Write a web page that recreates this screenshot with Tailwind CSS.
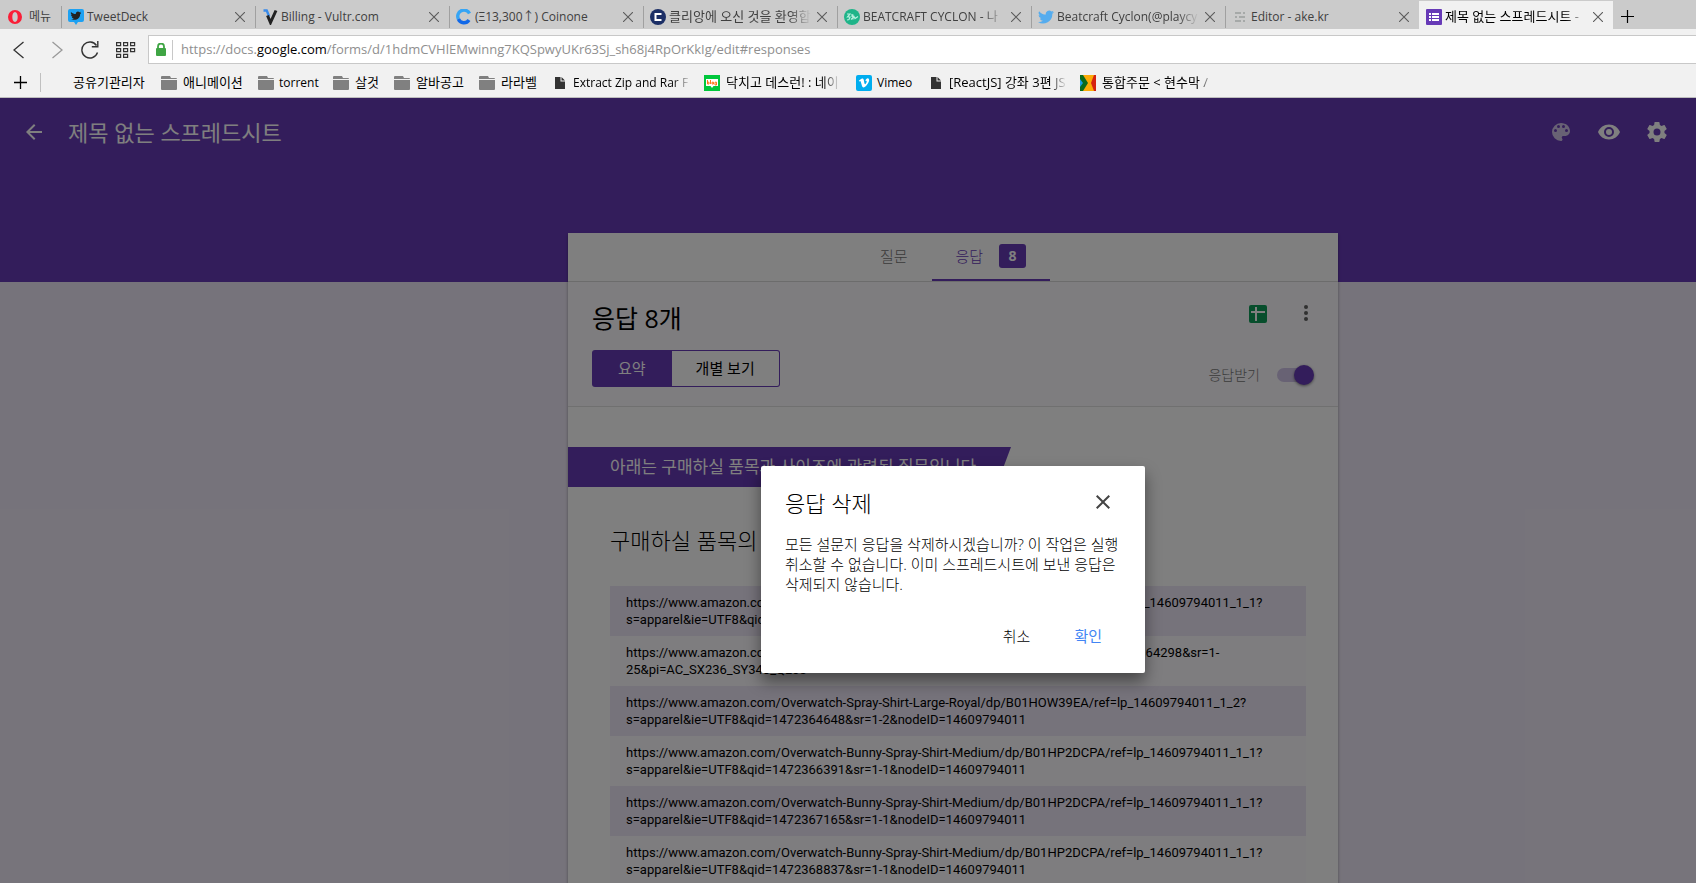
<!DOCTYPE html>
<html lang="ko">
<head>
<meta charset="utf-8">
<meta name="viewport" content="width=device-width, initial-scale=1">
<title>제목 없는 스프레드시트</title>
<script src="https://cdn.jsdelivr.net/npm/@tailwindcss/browser@4"></script>
</head>
<body class="flex h-screen flex-col overflow-hidden bg-[#f1f1f1] font-['Open_Sans','Noto_Sans_CJK_KR',sans-serif] text-[13px] text-black">

<svg class="hidden" aria-hidden="true">
  <symbol id="x" viewBox="0 0 10 10"><path d="M0 0l10 10M10 0L0 10" fill="none" stroke="#5c5c5c" stroke-width="1.1"/></symbol>
  <symbol id="folder" viewBox="0 0 16 14"><path d="M0 1q0-1 1-1h8l1 2h5q1 0 1 1H0z M0 4h16v9q0 1-1 1H1q-1 0-1-1z" fill="#808080"/></symbol>
  <symbol id="doc" viewBox="0 0 10 12"><path d="M0 0h5.500v4.500H10V12H0z M6.500 0L10 3.500H6.500z" fill="#333"/></symbol>
</svg>

<!-- Browser tabs -->
<nav aria-label="탭" class="flex h-[29px] shrink-0 overflow-hidden bg-[#cbcbcb] text-[#404040]">
  <button class="flex w-[61px] shrink-0 items-center gap-[7px] pt-1 pl-2 text-xs">
    <svg class="size-[14px]" viewBox="0 0 14 14"><path fill-rule="evenodd" fill="#fa1e37" d="M7 0a7 7 0 100 14A7 7 0 007 0zm0 2c1.700 0 2.700 2.200 2.700 5S8.700 12 7 12 4.300 9.800 4.300 7 5.300 2 7 2z"/></svg>
    메뉴
  </button>
  <div class="flex w-[194px] shrink-0 items-center pt-1">
    <span class="h-[22px] w-px bg-[#a0a0a0]"></span>
    <svg class="ml-[6px] size-4 shrink-0" viewBox="0 0 16 16"><path fill="#1da1f2" d="M2 0h12q2 0 2 2v9q0 2-2 2h-4l-2 3-2-3H2q-2 0-2-2V2q0-2 2-2z"/><path fill="#222" d="M3 3c1.500 1.500 3 2 4.800 2C7.600 3 10 1.800 11.500 3.200L13 2.800l-.8 1.300.9-.1-1 1.200C12.200 9.500 8 12.200 3 10.200c1.300 0 2-.2 2.700-.8-1.200-.2-1.600-.7-1.900-1.500h.9C3.500 7.300 3.100 6.600 3.100 5.700l.8.200C2.900 5 2.600 4 3 3z"/></svg>
    <span class="ml-[3px] w-[142px] overflow-hidden text-xs whitespace-nowrap">TweetDeck</span>
    <button aria-label="탭 닫기" class="ml-[6px]"><svg class="size-[10px]"><use href="#x"/></svg></button>
  </div>
  <div class="flex w-[194px] shrink-0 items-center pt-1">
    <span class="h-[22px] w-px bg-[#a0a0a0]"></span>
    <svg class="ml-[6px] size-4 shrink-0" viewBox="0 0 16 16"><path d="M1.500 1.500h3.200l2.500 6" fill="none" stroke="#3a8bea" stroke-width="2.400"/><path d="M5.500 6.500l3 7L14 1.500" fill="none" stroke="#222" stroke-width="3"/></svg>
    <span class="ml-[3px] w-[142px] overflow-hidden text-xs whitespace-nowrap">Billing - Vultr.com</span>
    <button aria-label="탭 닫기" class="ml-[6px]"><svg class="size-[10px]"><use href="#x"/></svg></button>
  </div>
  <div class="flex w-[194px] shrink-0 items-center pt-1">
    <span class="h-[22px] w-px bg-[#a0a0a0]"></span>
    <svg class="ml-[6px] size-4 shrink-0" viewBox="0 0 16 16"><path d="M13.500 4.500A6 6 0 102.400 10" fill="none" stroke="#36a5f5" stroke-width="3.400"/><path d="M2.400 10A6 6 0 0013 11" fill="none" stroke="#1269e8" stroke-width="3.400"/></svg>
    <span class="ml-[3px] w-[142px] overflow-hidden text-xs whitespace-nowrap">(Ξ13,300↑) Coinone</span>
    <button aria-label="탭 닫기" class="ml-[6px]"><svg class="size-[10px]"><use href="#x"/></svg></button>
  </div>
  <div class="flex w-[194px] shrink-0 items-center pt-1">
    <span class="h-[22px] w-px bg-[#a0a0a0]"></span>
    <svg class="ml-[6px] size-4 shrink-0" viewBox="0 0 16 16"><circle cx="8" cy="8" r="8" fill="#1c2f66"/><path d="M11.500 5h-6v6h6" fill="none" stroke="#fff" stroke-width="2"/></svg>
    <span class="ml-[3px] w-[142px] whitespace-nowrap mask-r-from-85%">클리앙에 오신 것을 환영합</span>
    <button aria-label="탭 닫기" class="ml-[6px]"><svg class="size-[10px]"><use href="#x"/></svg></button>
  </div>
  <div class="flex w-[194px] shrink-0 items-center pt-1">
    <span class="h-[22px] w-px bg-[#a0a0a0]"></span>
    <svg class="ml-[6px] size-4 shrink-0" viewBox="0 0 16 16"><circle cx="8" cy="8" r="8" fill="#1fb489"/><path d="M3 5h3L3.500 8H6l-1 2.500L3 11M8 5v3m-1 2.500l3-3 1 2 3-2M9 10.500v-5" fill="none" stroke="#b4eedd" stroke-width="1.200"/></svg>
    <span class="ml-[3px] w-[142px] text-xs whitespace-nowrap mask-r-from-85%">BEATCRAFT CYCLON - 나</span>
    <button aria-label="탭 닫기" class="ml-[6px]"><svg class="size-[10px]"><use href="#x"/></svg></button>
  </div>
  <div class="flex w-[194px] shrink-0 items-center pt-1">
    <span class="h-[22px] w-px bg-[#a0a0a0]"></span>
    <svg class="ml-[6px] size-4 shrink-0" viewBox="0 0 24 24"><path fill="#55acee" d="M24 4.600a10 10 0 01-2.800.8 5 5 0 002.100-2.700 10 10 0 01-3.100 1.200 4.900 4.900 0 00-8.400 4.500A14 14 0 011.700 3.200a4.900 4.900 0 001.500 6.500 4.900 4.900 0 01-2.200-.6 4.900 4.900 0 003.900 4.900 5 5 0 01-2.200.1 4.900 4.900 0 004.600 3.400A10 10 0 010 19.500a14 14 0 0021.500-12.400A10 10 0 0024 4.600z"/></svg>
    <span class="ml-[3px] w-[142px] text-xs whitespace-nowrap mask-r-from-85%">Beatcraft Cyclon(@playcy</span>
    <button aria-label="탭 닫기" class="ml-[6px]"><svg class="size-[10px]"><use href="#x"/></svg></button>
  </div>
  <div class="flex w-[194px] shrink-0 items-center pt-1">
    <span class="h-[22px] w-px bg-[#a0a0a0]"></span>
    <svg class="ml-[6px] size-4 shrink-0" viewBox="0 0 16 16"><path d="M3 4h6m2 0h2M3 8h2m2 0h6M3 12h6m2 0h2" stroke="#9a9f9d" stroke-width="1.600"/></svg>
    <span class="ml-[3px] w-[142px] overflow-hidden text-xs whitespace-nowrap">Editor - ake.kr</span>
    <button aria-label="탭 닫기" class="ml-[6px]"><svg class="size-[10px]"><use href="#x"/></svg></button>
  </div>
  <div class="mt-px flex w-[194px] shrink-0 items-center bg-[#f1f1f1] pt-[3px] text-black">
    <svg class="ml-[7px] size-4 shrink-0" viewBox="0 0 16 16"><rect width="16" height="16" rx="1" fill="#673ab7"/><path d="M3 5h2m1 0h7M3 8h2m1 0h7M3 11h2m1 0h7" stroke="#fff" stroke-width="2"/></svg>
    <span class="ml-[3px] w-[142px] whitespace-nowrap mask-r-from-85%">제목 없는 스프레드시트 -</span>
    <button aria-label="탭 닫기" class="ml-[6px]"><svg class="size-[10px]"><use href="#x"/></svg></button>
  </div>
  <button aria-label="새 탭" class="ml-2 pt-1"><svg class="size-[13px]" viewBox="0 0 13 13"><path d="M6.500 0v13M0 6.500h13" stroke="#000" stroke-width="1.200"/></svg></button>
</nav>

<!-- Address bar -->
<div class="mt-[6px] flex h-[29px] shrink-0 items-center">
  <div class="flex w-[148px] shrink-0 items-center pl-[13px]">
    <button aria-label="뒤로"><svg class="h-[18px] w-[11px]" viewBox="0 0 11 18"><path d="M10.500 1L1 9l9.500 8" fill="none" stroke="#333" stroke-width="1.300"/></svg></button>
    <button aria-label="앞으로" class="ml-7"><svg class="h-[18px] w-[11px]" viewBox="0 0 11 18"><path d="M.5 1L10 9 .5 17" fill="none" stroke="#9a9a9a" stroke-width="1.300"/></svg></button>
    <button aria-label="새로고침" class="ml-[18px]"><svg class="size-[18px]" viewBox="0 0 18 18"><path d="M16.500 11.500A8 8 0 1115.500 4.500M16.800 0v5.700h-6" fill="none" stroke="#333" stroke-width="1.400"/></svg></button>
    <button aria-label="스피드 다이얼" class="ml-[17px]"><svg class="h-4 w-[20px]" viewBox="0 0 20 16"><path d="M.6.6h4v3h-4zM7.600.6h4v3h-4zM14.600.6h4v3h-4zM.6 6.600h4v3h-4zM7.600 6.600h4v3h-4zM14.600 6.600h4v3h-4zM.6 12.400h4v3h-4zM7.600 12.400h4v3h-4z" fill="none" stroke="#333" stroke-width="1.200"/></svg></button>
  </div>
  <div class="flex h-full flex-1 items-center border border-r-0 border-[#c8c8c8] bg-white">
    <svg class="ml-[7px] h-[13px] w-[10px]" viewBox="0 0 10 13"><path d="M2 6V3.500a3 3 0 016 0V6" fill="none" stroke="#3fa544" stroke-width="1.800"/><rect y="5" width="10" height="8" rx="1" fill="#3fa544"/></svg>
    <span class="ml-[6px] h-5 w-px bg-[#c8c8c8]"></span>
    <a href="#responses" class="ml-2 whitespace-nowrap text-[#8f8f8f]">https://docs.<span class="text-black">google.com</span>/forms/d/1hdmCVHlEMwinng7KQSpwyUKr63Sj_sh68j4RpOrKkIg/edit#responses</a>
  </div>
</div>

<!-- Bookmarks bar -->
<div class="flex h-[34px] shrink-0 items-center overflow-hidden border-b border-[#bdbdbd] pt-1 whitespace-nowrap">
  <button aria-label="북마크 추가" class="ml-[14px]"><svg class="size-[13px]" viewBox="0 0 13 13"><path d="M6.500 0v13M0 6.500h13" stroke="#000" stroke-width="1.300"/></svg></button>
  <span class="ml-[13px] h-[19px] w-px bg-[#c0c0c0]"></span>
  <a href="#" class="ml-8 w-[88px]">공유기관리자</a>
  <a href="#" class="flex w-[97px] items-center gap-[6px]"><svg class="h-[14px] w-4 shrink-0"><use href="#folder"/></svg>애니메이션</a>
  <a href="#" class="flex w-[75px] items-center gap-[5px] text-xs"><svg class="h-[14px] w-4 shrink-0"><use href="#folder"/></svg>torrent</a>
  <a href="#" class="flex w-[61px] items-center gap-[6px]"><svg class="h-[14px] w-4 shrink-0"><use href="#folder"/></svg>살것</a>
  <a href="#" class="flex w-[85px] items-center gap-[6px]"><svg class="h-[14px] w-4 shrink-0"><use href="#folder"/></svg>알바공고</a>
  <a href="#" class="flex w-[76px] items-center gap-[6px]"><svg class="h-[14px] w-4 shrink-0"><use href="#folder"/></svg>라라벨</a>
  <a href="#" class="flex w-[149px] items-center gap-2 text-xs"><svg class="h-3 w-[10px] shrink-0"><use href="#doc"/></svg><span class="w-[118px] mask-r-from-85%">Extract Zip and Rar F</span></a>
  <a href="#" class="flex w-[152px] items-center gap-[6px]">
    <svg class="size-4 shrink-0" viewBox="0 0 16 16"><path fill="#00c73c" d="M0 0h16v16H0z"/><path fill="#fff" d="M2 4h12v7H9.500L8 13l-1.500-2H2z"/><path d="M3.500 5v4H5V7.200H3.500M6.500 5v4M8 7.200h1.500V9H8zM11 7.200h1.500V10H11z" stroke="#f60" stroke-width=".9" fill="none"/></svg>
    <span class="w-[114px] mask-r-from-85%">닥치고 데스런! : 네이</span></a>
  <a href="#" class="flex w-[75px] items-center gap-[5px] text-xs">
    <svg class="size-4 shrink-0" viewBox="0 0 24 24"><rect width="24" height="24" rx="3" fill="#00adef"/><path fill="#fff" d="M19.700 8.200c-.1 1.500-1.200 3.700-3.200 6.300-2.100 2.700-3.900 4.100-5.300 4.100-.9 0-1.700-.8-2.300-2.500L7.600 11.500c-.5-1.700-1-2.500-1.500-2.500-.1 0-.5.3-1.200.7L4.200 8.800c2-1.700 3.900-3.500 5.100-3.600 1.300-.1 2.200.8 2.500 2.800.7 4.500 1.200 6 1.900 6 .6 0 2.300-2.800 2.400-3.900.1-1.500-1.100-1.500-2.200-1C15.500 3.200 20 3.800 19.700 8.200z"/></svg>Vimeo</a>
  <a href="#" class="flex w-[149px] items-center gap-2"><svg class="h-3 w-[10px] shrink-0"><use href="#doc"/></svg><span class="w-[118px] mask-r-from-85%">[ReactJS] 강좌 3편 JS</span></a>
  <a href="#" class="flex items-center gap-[6px]">
    <svg class="size-4 shrink-0" viewBox="0 0 16 16"><path fill="#fbab08" d="M0 0h16v16H0z"/><path fill="#1a9fe8" d="M0 3l4 5-4 5z"/><path fill="#0a6b1c" d="M0 0h3l5 8-5 8H0v-4l3-4-3-4z"/><path fill="#d52211" d="M16 0v16h-2l-3-8 3-8z"/></svg>
    <span class="w-[112px] mask-r-from-85%">통합주문 &lt; 현수막 /</span></a>
</div>

<!-- Forms application -->
<div class="relative min-h-0 flex-1 overflow-hidden bg-[#ede7f6]">
  <header class="h-[184px] bg-[#673ab7] text-white">
    <div class="flex h-[68px] items-center px-[22px]">
      <button aria-label="뒤로"><svg class="size-6" viewBox="0 0 24 24" fill="currentColor"><path d="M20 11H7.830l5.590-5.590L12 4l-8 8 8 8 1.410-1.410L7.830 13H20v-2z"/></svg></button>
      <h1 class="ml-[22px] text-[22px] leading-7">제목 없는 스프레드시트</h1>
      <div class="mr-[5px] ml-auto flex gap-6">
        <button aria-label="색상 팔레트" class="opacity-70"><svg class="size-6" viewBox="0 0 24 24" fill="currentColor"><path d="M12 3a9 9 0 000 18c.83 0 1.500-.67 1.500-1.500 0-.39-.15-.74-.39-1.010-.23-.26-.38-.61-.38-.99 0-.83.67-1.500 1.500-1.500H16c2.760 0 5-2.240 5-5 0-4.420-4.030-8-9-8zm-5.500 9a1.500 1.500 0 110-3 1.500 1.500 0 010 3zm3-4a1.500 1.500 0 110-3 1.500 1.500 0 010 3zm5 0a1.500 1.500 0 110-3 1.500 1.500 0 010 3zm3 4a1.500 1.500 0 110-3 1.500 1.500 0 010 3z"/></svg></button>
        <button aria-label="미리보기"><svg class="size-6" viewBox="0 0 24 24" fill="currentColor"><path d="M12 4.500C7 4.500 2.730 7.610 1 12c1.730 4.390 6 7.500 11 7.500s9.270-3.110 11-7.500c-1.730-4.390-6-7.500-11-7.500zM12 17a5 5 0 110-10 5 5 0 010 10zm0-8a3 3 0 100 6 3 3 0 000-6z"/></svg></button>
        <button aria-label="설정"><svg class="size-6" viewBox="0 0 24 24" fill="currentColor"><path d="M19.430 12.980c.04-.32.07-.64.07-.98s-.03-.66-.07-.98l2.110-1.650c.19-.15.24-.42.12-.64l-2-3.460c-.12-.22-.39-.3-.61-.22l-2.490 1c-.52-.4-1.080-.73-1.690-.98l-.38-2.650A.488.488 0 0014 2h-4c-.25 0-.46.18-.49.42l-.38 2.650c-.61.25-1.170.59-1.690.98l-2.490-1c-.23-.09-.49 0-.61.22l-2 3.460c-.13.22-.07.49.12.64l2.110 1.650c-.04.32-.07.65-.07.98s.03.66.07.98l-2.110 1.650c-.19.15-.24.42-.12.64l2 3.460c.12.22.39.3.61.22l2.490-1c.52.4 1.080.73 1.690.98l.38 2.650c.03.24.24.42.49.42h4c.25 0 .46-.18.49-.42l.38-2.650c.61-.25 1.170-.59 1.690-.98l2.490 1c.23.09.49 0 .61-.22l2-3.460c.12-.22.07-.49-.12-.64l-2.110-1.650zM12 15.500a3.500 3.500 0 110-7 3.500 3.500 0 010 7z"/></svg></button>
      </div>
    </div>
  </header>

  <main class="-mt-[49px] flex justify-center pl-[210px]">
    <div class="w-[770px] bg-white shadow-[0_2px_3px_rgba(0,0,0,0.35)]">
      <div role="tablist" class="flex h-[49px] justify-center border-b border-[#d8d8d8] text-[15px]">
        <button role="tab" aria-selected="false" class="border-b-2 border-transparent px-6 font-light text-[#757575]">질문</button>
        <button role="tab" aria-selected="true" class="flex items-center border-b-2 border-[#673ab7] px-6 font-light text-[#673ab7]">응답<span class="ml-4 flex h-6 w-[27px] items-center justify-center rounded-[3px] bg-[#673ab7] text-sm font-bold text-white">8</span></button>
      </div>

      <section class="flex h-[125px] justify-between border-b border-[#e0e0e0] bg-[#fcfbff] px-6 pt-5">
        <div>
          <h2 class="text-[25px] leading-8">응답 8개</h2>
          <div class="mt-4 flex h-[37px] text-[15px]">
            <button class="rounded-l-[3px] bg-[#673ab7] px-[26px] text-white">요약</button>
            <button class="rounded-r-[3px] border border-l-0 border-[#673ab7] bg-white px-6">개별 보기</button>
          </div>
        </div>
        <div class="flex flex-col items-end justify-between pb-[21px]">
          <div class="-mr-1 flex gap-6">
            <button aria-label="스프레드시트에서 응답 보기"><svg class="size-6" viewBox="0 0 24 24"><rect x="3" y="3" width="18" height="18" rx="2" fill="#0f9d58"/><path d="M10 5v14M5 10h14" stroke="#fff" stroke-width="2"/></svg></button>
            <button aria-label="더보기"><svg class="size-6" viewBox="0 0 24 24" fill="#616161"><circle cx="12" cy="5" r="2"/><circle cx="12" cy="11" r="2"/><circle cx="12" cy="17" r="2"/></svg></button>
          </div>
          <label class="flex items-center gap-4 text-sm font-light text-[#757575]">응답받기
            <span class="relative flex h-5 w-[38px] items-center">
              <input type="checkbox" checked class="ml-px h-[14px] w-9 appearance-none rounded-full bg-[#d1c4e9]">
              <span class="pointer-events-none absolute right-0 size-5 rounded-full bg-[#673ab7] shadow-[0_1px_3px_rgba(0,0,0,0.5)]"></span>
            </span>
          </label>
        </div>
      </section>

      <section class="pt-10">
        <h3 class="flex h-10 w-[443px] items-center bg-[#673ab7] pl-[42px] text-[17px] whitespace-nowrap text-white [clip-path:polygon(0_0,100%_0,428px_100%,0_100%)]">아래는 구매하실 품목과 사이즈에 관련된 질문입니다.</h3>
        <div class="pt-[39px] pr-8 pl-[42px]">
          <h4 class="text-[22px] leading-7 font-light">구매하실 품목의</h4>
          <ul class="mt-8 font-[Roboto,sans-serif] text-[13px] leading-[17px] *:h-[50px] *:px-4 *:py-2 *:odd:bg-[#ede7f6] *:even:bg-[#fcfbff]">
            <li>https://www.amazon.com/Overwatch-Bunny-Spray-Shirt-Medium/dp/B01HP2DCPA/ref=lp_14609794011_1_1?<br>s=apparel&amp;ie=UTF8&amp;qid=1472363902&amp;sr=1-1&amp;nodeID=14609794011</li>
            <li>https://www.amazon.com/Logo-Shirt/dp/B01HOW39EA/ref=sr_1_25?ie=UTF8&amp;qid=1472364298&amp;sr=1-<br>25&amp;pi=AC_SX236_SY340_QL65</li>
            <li>https://www.amazon.com/Overwatch-Spray-Shirt-Large-Royal/dp/B01HOW39EA/ref=lp_14609794011_1_2?<br>s=apparel&amp;ie=UTF8&amp;qid=1472364648&amp;sr=1-2&amp;nodeID=14609794011</li>
            <li>https://www.amazon.com/Overwatch-Bunny-Spray-Shirt-Medium/dp/B01HP2DCPA/ref=lp_14609794011_1_1?<br>s=apparel&amp;ie=UTF8&amp;qid=1472366391&amp;sr=1-1&amp;nodeID=14609794011</li>
            <li>https://www.amazon.com/Overwatch-Bunny-Spray-Shirt-Medium/dp/B01HP2DCPA/ref=lp_14609794011_1_1?<br>s=apparel&amp;ie=UTF8&amp;qid=1472367165&amp;sr=1-1&amp;nodeID=14609794011</li>
            <li>https://www.amazon.com/Overwatch-Bunny-Spray-Shirt-Medium/dp/B01HP2DCPA/ref=lp_14609794011_1_1?<br>s=apparel&amp;ie=UTF8&amp;qid=1472368837&amp;sr=1-1&amp;nodeID=14609794011</li>
          </ul>
        </div>
      </section>
    </div>
  </main>

  <!-- Confirmation dialog -->
  <div class="absolute inset-0 flex items-start justify-center bg-black/50 pt-[368px] pl-[210px]">
    <div role="dialog" aria-modal="true" aria-labelledby="dlg-title" class="w-[384px] rounded-[2px] bg-white px-6 pt-[23px] pb-[19px] shadow-[0_8px_16px_rgba(0,0,0,0.45)]">
      <div class="flex items-center justify-between">
        <h2 id="dlg-title" class="text-[22px] leading-7 font-light text-black">응답 삭제</h2>
        <button aria-label="닫기" class="mr-[6px] -mt-[2px]"><svg class="size-6" viewBox="0 0 24 24" fill="#444"><path d="M19 6.410L17.590 5 12 10.590 6.410 5 5 6.410 10.590 12 5 17.590 6.410 19 12 13.410 17.590 19 19 17.590 13.410 12z"/></svg></button>
      </div>
      <p class="mt-[17px] text-[15px] leading-5 font-light whitespace-nowrap text-black">모든 설문지 응답을 삭제하시겠습니까? 이 작업은 실행<br>취소할 수 없습니다. 이미 스프레드시트에 보낸 응답은<br>삭제되지 않습니다.</p>
      <div class="mt-6 flex justify-end gap-3 pr-[3px] text-[15px]">
        <button class="h-9 px-4 font-light text-black">취소</button>
        <button class="h-9 px-4 text-[#4285f4]">확인</button>
      </div>
    </div>
  </div>
</div>
</body>
</html>
